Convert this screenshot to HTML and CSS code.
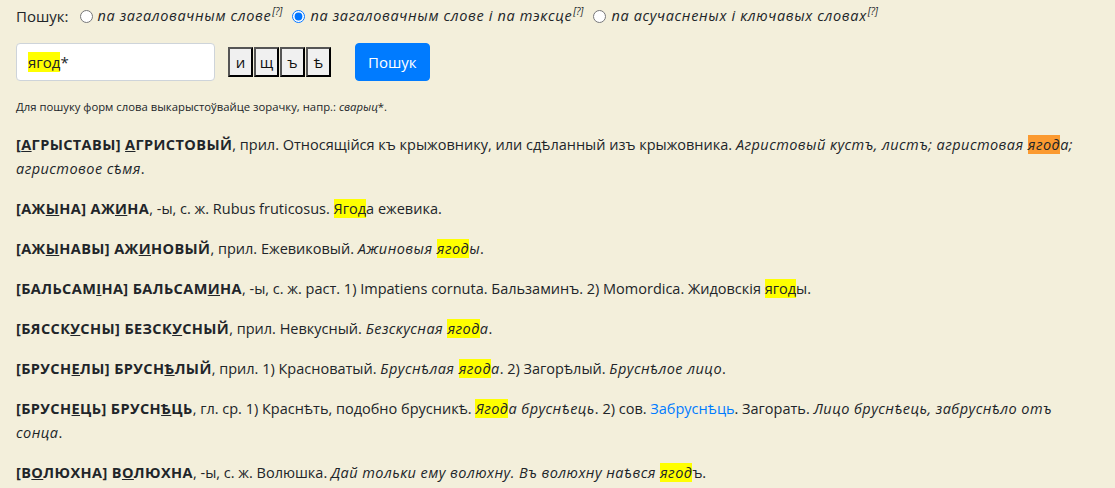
FILE: index.html
```html
<!DOCTYPE html>
<html lang="be">
<head>
<meta charset="utf-8">
<title>Пошук</title>
<link rel="stylesheet" href="styles.css">
</head>
<body>
<div class="modes">
  <span class="modes-label">Пошук:</span>
  <label class="mode"><input type="radio" name="mode"><i>па загаловачным слове</i><sup class="q">[?]</sup></label>
  <label class="mode"><input type="radio" name="mode" checked><i>па загаловачным слове і па тэксце</i><sup class="q">[?]</sup></label>
  <label class="mode"><input type="radio" name="mode"><i>па асучасненых і ключавых словах</i><sup class="q">[?]</sup></label>
</div>

<div class="search">
  <div class="field"><span class="hl">ягод</span>*</div>
  <div class="keys">
    <button class="key">и</button><button class="key">щ</button><button class="key">ъ</button><button class="key">ѣ</button>
  </div>
  <button class="go">Пошук</button>
</div>

<div class="hint">Для пошуку форм слова выкарыстоўвайце зорачку, напр.: <i>сварыц</i>*.</div>

<div class="entries">
  <p class="entry"><b>[<u>А</u>ГРЫСТАВЫ] <u>А</u>ГРИСТОВЫЙ</b>, прил. Относящійся къ крыжовнику, или сдѣланный изъ крыжовника. <i>Агристовый кустъ, листъ; агристовая <span class="hl cur">ягод</span>а; агристовое сѣмя</i>.</p>
  <p class="entry"><b>[АЖ<u>Ы</u>НА] АЖ<u>И</u>НА</b>, -ы, с. ж. Rubus fruticosus. <span class="hl">Ягод</span>а ежевика.</p>
  <p class="entry"><b>[АЖ<u>Ы</u>НАВЫ] АЖ<u>И</u>НОВЫЙ</b>, прил. Ежевиковый. <i>Ажиновыя <span class="hl">ягод</span>ы</i>.</p>
  <p class="entry"><b>[БАЛЬСАМ<u>І</u>НА] БАЛЬСАМ<u>И</u>НА</b>, -ы, с. ж. раст. 1) Impatiens cornuta. Бальзаминъ. 2) Momordica. Жидовскія <span class="hl">ягод</span>ы.</p>
  <p class="entry"><b>[БЯССК<u>У</u>СНЫ] БЕЗСК<u>У</u>СНЫЙ</b>, прил. Невкусный. <i>Безскусная <span class="hl">ягод</span>а</i>.</p>
  <p class="entry"><b>[БРУСН<u>Е</u>ЛЫ] БРУСН<u>Ѣ</u>ЛЫЙ</b>, прил. 1) Красноватый. <i>Бруснѣлая <span class="hl">ягод</span>а</i>. 2) Загорѣлый. <i>Бруснѣлое лицо</i>.</p>
  <p class="entry"><b>[БРУСН<u>Е</u>ЦЬ] БРУСН<u>Ѣ</u>ЦЬ</b>, гл. ср. 1) Краснѣть, подобно брусникѣ. <i><span class="hl">Ягод</span>а бруснѣець</i>. 2) сов. <a class="ref" href="#">Забруснѣць</a>. Загорать. <i>Лицо бруснѣець, забруснѣло отъ сонца</i>.</p>
  <p class="entry"><b>[В<u>О</u>ЛЮХНА] В<u>О</u>ЛЮХНА</b>, -ы, с. ж. Волюшка. <i>Дай тольки ему волюхну. Въ волюхну наѣвся <span class="hl">ягод</span></i>ъ.</p>
</div>
</body>
</html>
```
FILE: styles.css
```css
html, body {
  margin: 0;
  background: #f3efdb;
}
body {
  padding: 4px 22px 0 16px;
  font-family: "Open Sans", "Noto Sans", sans-serif;
  font-size: 14.5px;
  line-height: 24px;
  color: #212529;
}
i {
  letter-spacing: 0.45px;
}
b {
  letter-spacing: 0.4px;
}
.modes {
  display: flex;
  align-items: center;
  height: 24px;
  white-space: nowrap;
}
.modes-label {
  margin-right: 10px;
  font-size: 15px;
}
.mode {
  display: flex;
  align-items: center;
  margin-right: 9px;
}
.mode i {
  letter-spacing: 0.65px;
}
.mode input {
  margin: 0 5px 0 1px;
  width: 13px;
  height: 13px;
}
.q {
  font-size: 10px;
  font-style: italic;
  line-height: 1;
  align-self: flex-start;
  margin-top: 2px;
  margin-left: 1px;
}
.search {
  display: flex;
  align-items: center;
  margin-top: 15px;
}
.field {
  box-sizing: border-box;
  width: 199px;
  height: 38px;
  padding: 6px 11px;
  background: #fff;
  border: 1px solid #ced4da;
  border-radius: 4px;
  font-size: 15px;
  line-height: 24px;
}
.keys {
  display: flex;
  gap: 1px;
  margin-left: 13px;
  align-self: flex-start;
  margin-top: 4px;
}
.key {
  box-sizing: border-box;
  width: 25px;
  height: 30px;
  padding: 0;
  background: #f0f0f0;
  border: 2px outset #555;
  font-family: "Open Sans", "Noto Sans", sans-serif;
  font-size: 15px;
  color: #111;
}
.go {
  box-sizing: border-box;
  margin-left: 24px;
  height: 38px;
  padding: 6px 12px;
  background: #007bff;
  border: 1px solid #007bff;
  border-radius: 4px;
  color: #fff;
  font-family: "Open Sans", "Noto Sans", sans-serif;
  font-size: 15px;
  line-height: 24px;
}
.hint {
  margin-top: 18px;
  font-size: 11.3px;
  line-height: 16px;
}
.hint i {
  letter-spacing: 0;
}
.entries {
  margin-top: 18px;
}
.entry {
  margin: 0 0 16px;
}
.hl {
  background: #ffff00;
}
.hl.cur {
  background: #fb9a30;
}
.ref {
  color: #007bff;
  text-decoration: none;
}
```
